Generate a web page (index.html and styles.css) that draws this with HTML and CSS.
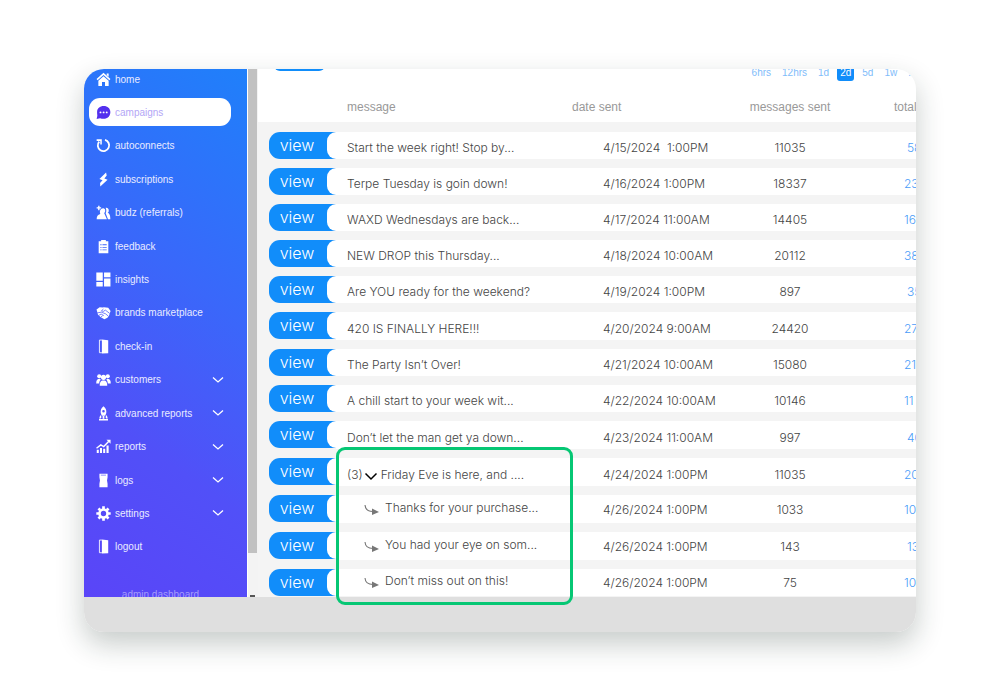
FILE: index.html
```html
<!DOCTYPE html>
<html lang="en">
<head>
<meta charset="utf-8">
<title>Campaigns</title>
<link rel="stylesheet" href="styles.css">
</head>
<body>
<div class="device">
  <div class="screen">
    <aside class="sidebar">
      <nav class="nav">
        <a class="item" href="#"><svg class="icon" viewBox="0 0 14 14"><path d="M1 7.2 7 1.8l6 5.4" fill="none" stroke="currentColor" stroke-width="1.5"/><path d="M10 1.5h1.8v3L10 3zM7 4l4.8 4.2V13H8.4V9.4H5.6V13H2.2V8.2z"/></svg>home</a>
        <a class="item active" href="#"><svg class="icon" viewBox="0 0 14 14"><path d="M7.2 1C3.6 1 1 3.300 1 6.700c0 1.600.3 2.500.2 3.600L.6 13l3.200-.6c1 .4 2.200.5 3.400.5 3.600 0 6.200-2.600 6.200-6.100S10.800 1 7.200 1z"/><g fill="#fff"><circle cx="4.200" cy="6.900" r=".9"/><circle cx="7.100" cy="6.900" r=".9"/><circle cx="10" cy="6.900" r=".9"/></g></svg>campaigns</a>
        <a class="item" href="#"><svg class="icon" viewBox="0 0 14 14"><path d="M3 3.400A5.300 5.300 0 1 0 8.400 1.800" fill="none" stroke="currentColor" stroke-width="1.700"/><path d="M.6 1.200h4.800V6H4V2.800H.6z"/></svg>autoconnects</a>
        <a class="item" href="#"><svg class="icon" viewBox="0 0 14 14"><path d="M9.400.4 3.200 6.600l2.900 1.100-2.300 2.500.2 3.400 6.800-6.400-3-1.200L10 3.200z"/></svg>subscriptions</a>
        <a class="item" href="#"><svg class="icon" viewBox="0 0 14 14"><path d="M2 .6h1.300V2h1.500v1.300H3.300v1.500H2V3.300H.6V2H2zM6 3.200c1.500-.5 2.800.7 2.600 2.300 0 1-.6 1.600-1 2l2.600 5.700H.6c.1-2.700.9-4 3.500-4.800C3.200 6.300 3.600 3.700 6 3.200zM9 2.600c1.900-.3 3.200 1 2.900 2.900-.1.900-.6 1.400-1 1.800 1.900.8 2.500 2.700 2.500 5.900h-2.200L9 7.700c.8-1.500.9-3.200 0-5.100z"/></svg>budz (referrals)</a>
        <a class="item" href="#"><svg class="icon" viewBox="0 0 14 14"><path fill-rule="evenodd" d="M2.500 2h2.300V1h4.400v1h2.300v11.300h-9zM4 5v.9h1.200V5zm2 0v.9h4V5zM4 7.400v.8h1.200v-.8zm2 0v.8h4v-.8zM4 9.800v.8h1.200v-.8zm2 0v.8h4v-.8z"/></svg>feedback</a>
        <a class="item" href="#"><svg class="icon" viewBox="0 0 14 14"><path d="M.3.500h6v7.600h-6zM7.500.500h6v4.300h-6zM.3 9.300h6v4.200h-6zM7.500 6h6v7.500h-6z"/></svg>insights</a>
        <a class="item" href="#"><svg class="icon" viewBox="0 0 14 14"><path d="M.5 4.200 3.400 2l2.800.4L7.400 2l4 .5 2.200 3.100-1.300 4-1.600 2.300-2.900 1.300-3.600-2L1.800 8.800z"/><path d="M1 7.400 5 6.700l3.900 1.500 2.400 2M6.900 3.800 5.100 5.400l1.700.6 2-1.200 4 3.100M2.800 9.500l2-1 2.500 1.400M4.700 11l1.500-1" fill="none" stroke="#4b59fa" stroke-width=".7"/></svg>brands marketplace</a>
        <a class="item" href="#"><svg class="icon" viewBox="0 0 14 14"><path d="M5.500.500 11.400 1.200v12L5.500 13.500z"/><path d="M5.500 1H3.200v11.800h2.300" fill="none" stroke="currentColor" stroke-width=".8"/></svg>check-in</a>
        <a class="item" href="#"><svg class="icon" viewBox="0 0 14 14"><circle cx="3" cy="4" r="1.900"/><circle cx="11" cy="4" r="1.900"/><circle cx="7" cy="5" r="2.400"/><path d="M.2 10.800C.2 7.800 1 6.400 3.500 6.400l1 .8C3.300 8 3 9.300 3 10.800zM13.800 10.800c0-3-.8-4.400-3.300-4.400l-1 .8C10.700 8 11 9.300 11 10.800zM3.500 12.900c0-3 .7-4.900 3.500-4.900s3.500 1.900 3.500 4.900z"/></svg>customers<svg class="caret" viewBox="0 0 12 8"><path d="m1 1.500 5 4.500 5-4.500"/></svg></a>
        <a class="item" href="#"><svg class="icon" viewBox="0 0 14 14"><path fill-rule="evenodd" d="M7 .3c2.200 1.600 2.900 3.900 2.600 6.200L8.600 9H5.400L4.400 6.500C4.100 4.200 4.800 1.900 7 .3zm0 3.400a1.200 1.200 0 1 0 0 2.400 1.200 1.200 0 0 0 0-2.400z"/><path d="M6.200 9.300h1.600V12H6.200zM4 8.300l1.200 2-.8 1.400H3zM10 8.300l-1.200 2 .8 1.400H11zM2.800 12.200h8.400v1.300H2.800z"/></svg>advanced reports<svg class="caret" viewBox="0 0 12 8"><path d="m1 1.500 5 4.500 5-4.500"/></svg></a>
        <a class="item" href="#"><svg class="icon" viewBox="0 0 14 14"><path d="M.7 10h1.900v3H.7zM3.700 8.500h1.900V13H3.700zM6.700 9h1.900v4H6.700zM9.800 6h2v7h-2z"/><path d="M.5 8.600 4.500 5.500l2.700 1.600 4.800-5" fill="none" stroke="currentColor" stroke-width="1.300"/><path d="M9.800.6h3.800v3.800z"/></svg>reports<svg class="caret" viewBox="0 0 12 8"><path d="m1 1.500 5 4.500 5-4.500"/></svg></a>
        <a class="item" href="#"><svg class="icon" viewBox="0 0 14 14"><path d="M3.200.600h7.600V4l-.5 3 .5 3v3.400H3.200V10l.5-3-.5-3z"/><path d="M4.500 2h4.800" stroke="#5051f8" stroke-width=".6"/></svg>logs<svg class="caret" viewBox="0 0 12 8"><path d="m1 1.500 5 4.500 5-4.500"/></svg></a>
        <a class="item" href="#"><svg class="icon" viewBox="0 0 14 14"><circle cx="7" cy="7" r="3.700" fill="none" stroke="currentColor" stroke-width="2.400"/><path d="M7 .3v2.500M7 11.200v2.500M.3 7h2.500M11.200 7h2.500M2.300 2.300 4 4M10 10l1.700 1.700M2.300 11.700 4 10M10 4l1.700-1.700" stroke="currentColor" stroke-width="2.500"/></svg>settings<svg class="caret" viewBox="0 0 12 8"><path d="m1 1.500 5 4.500 5-4.500"/></svg></a>
        <a class="item" href="#"><svg class="icon" viewBox="0 0 14 14"><path d="M5.500.500 11.400 1.200v12L5.500 13.500z"/><path d="M5.500 1H3.200v11.800h2.300" fill="none" stroke="currentColor" stroke-width=".8"/></svg>logout</a>
      </nav>
      <div class="dashboard">admin dashboard</div>
    </aside>
    <div class="track"><div class="thumb"></div><div class="arrow"></div></div>
    <main class="main">
      <div class="toolbar">
        <button class="create" type="button" aria-label="Create"></button>
        <div class="ranges">
          <button type="button">6hrs</button><button type="button">12hrs</button><button type="button">1d</button><button type="button" class="on">2d</button><button type="button">5d</button><button type="button">1w</button><button type="button">.</button>
        </div>
      </div>
      <table class="messages">
        <colgroup><col class="c-view"><col><col class="c-date"><col class="c-sent"><col class="c-total"></colgroup>
        <thead><tr><th></th><th>message</th><th>date sent</th><th>messages sent</th><th>total</th></tr></thead>
        <tbody>
          <tr><td><button class="view" type="button">view</button></td><td>Start the week right! Stop by...</td><td>4/15/2024 &nbsp;1:00PM</td><td>11035</td><td class="short">58</td></tr>
          <tr><td><button class="view" type="button">view</button></td><td>Terpe Tuesday is goin down!</td><td>4/16/2024 1:00PM</td><td>18337</td><td>23</td></tr>
          <tr><td><button class="view" type="button">view</button></td><td>WAXD Wednesdays are back...</td><td>4/17/2024 11:00AM</td><td>14405</td><td>16</td></tr>
          <tr><td><button class="view" type="button">view</button></td><td>NEW DROP this Thursday...</td><td>4/18/2024 10:00AM</td><td>20112</td><td>38</td></tr>
          <tr><td><button class="view" type="button">view</button></td><td>Are YOU ready for the weekend?</td><td>4/19/2024 1:00PM</td><td>897</td><td class="short">35</td></tr>
          <tr class="tall"><td><button class="view" type="button">view</button></td><td>420 IS FINALLY HERE!!!</td><td>4/20/2024 9:00AM</td><td>24420</td><td>27</td></tr>
          <tr><td><button class="view" type="button">view</button></td><td>The Party Isn’t Over!</td><td>4/21/2024 10:00AM</td><td>15080</td><td>21</td></tr>
          <tr><td><button class="view" type="button">view</button></td><td>A chill start to your week wit...</td><td>4/22/2024 10:00AM</td><td>10146</td><td>11</td></tr>
          <tr class="tall"><td><button class="view" type="button">view</button></td><td>Don’t let the man get ya down...</td><td>4/23/2024 11:00AM</td><td>997</td><td class="short">40</td></tr>
          <tr class="tall"><td><button class="view" type="button">view</button></td><td><span class="parent">(3)<svg class="toggle" viewBox="0 0 14 9"><path d="m1.500 1.500 5.500 5.500 5.500-5.500"/></svg>Friday Eve is here, and ....</span></td><td>4/24/2024 1:00PM</td><td>11035</td><td>20</td></tr>
          <tr class="tall reply"><td><button class="view" type="button">view</button></td><td><span class="child"><svg class="hook" viewBox="0 0 16 12"><path d="M1 1c.3 4.500 3 6.500 8 6.500" fill="none" stroke="#777" stroke-width="1.100"/><path d="M8 4.500 15 8l-7 3z" fill="#777"/></svg>Thanks for your purchase...</span></td><td>4/26/2024 1:00PM</td><td>1033</td><td>10</td></tr>
          <tr class="tall reply"><td><button class="view" type="button">view</button></td><td><span class="child"><svg class="hook" viewBox="0 0 16 12"><path d="M1 1c.3 4.500 3 6.500 8 6.500" fill="none" stroke="#777" stroke-width="1.100"/><path d="M8 4.500 15 8l-7 3z" fill="#777"/></svg>You had your eye on som...</span></td><td>4/26/2024 1:00PM</td><td>143</td><td class="short">13</td></tr>
          <tr class="reply"><td><button class="view" type="button">view</button></td><td><span class="child"><svg class="hook" viewBox="0 0 16 12"><path d="M1 1c.3 4.500 3 6.500 8 6.500" fill="none" stroke="#777" stroke-width="1.100"/><path d="M8 4.500 15 8l-7 3z" fill="#777"/></svg>Don’t miss out on this!</span></td><td>4/26/2024 1:00PM</td><td>75</td><td>10</td></tr>
        </tbody>
      </table>
    </main>
  </div>
  <div class="chin"></div>
  <div class="highlight"></div>
</div>
</body>
</html>
```
FILE: styles.css
```css
* { box-sizing: border-box; }
body {
  margin: 0;
  padding: 69px 84px;
  background: #fff;
  font-family: "Liberation Sans", Arial, sans-serif;
  font-weight: 300;
}
button { font: inherit; border: 0; padding: 0; background: none; }
.device {
  position: relative;
  overflow: hidden;
  border-radius: 20px;
  background: #fff;
  box-shadow: 0 12px 28px rgba(20, 40, 35, 0.24);
}
.screen { display: flex; overflow: hidden; }
.chin { height: 35px; background: #dfdfdf; }

.sidebar {
  flex: 0 0 163px;
  display: flex;
  flex-direction: column;
  overflow: hidden;
  background: linear-gradient(215deg, #1f80fa 0%, #3a67fa 40%, #5150f8 70%, #5a45f8 100%);
}
.nav {
  flex: 1;
  display: flex;
  flex-direction: column;
  justify-content: space-between;
  margin-top: -4px;
  padding: 0 16px 0 5px;
}
.item {
  display: flex;
  align-items: center;
  gap: 4px;
  height: 28px;
  padding: 0 7px;
  border-radius: 11px;
  color: #e9ebff;
  font-size: 10px;
  text-decoration: none;
  white-space: nowrap;
}
.item.active { background: #fff; color: #b3a6f6; }
.icon { width: 15px; height: 15px; flex: none; fill: currentColor; color: #fff; }
.item.active .icon { color: #5330ee; }
.caret { width: 12px; height: 8px; margin-left: auto; fill: none; stroke: #fff; stroke-width: 1.3; }
.dashboard {
  height: 36px;
  padding: 28px 10px 0 0;
  color: #a49bfb;
  font-size: 10px;
  line-height: 12px;
  text-align: center;
}

.track {
  flex: 0 0 11px;
  display: flex;
  flex-direction: column;
  justify-content: space-between;
  align-items: center;
  padding-right: 1px;
  background: #f3f3f3;
  border-left: 1px solid #fff;
}
.thumb { width: 9px; height: 484px; background: #c1c1c1; }
.arrow { width: 5px; height: 2px; background: #555; }

.main { flex: 1; min-width: 0; overflow: hidden; }
.toolbar { display: flex; justify-content: space-between; align-items: flex-start; height: 25px; padding: 0 2px 0 16px; }
.create { width: 51px; height: 18px; margin-top: -16px; border-radius: 6px; background: #118dfa; }
.ranges { display: flex; gap: 5px; margin-top: -5px; }
.ranges button { height: 17px; padding: 0 3px; border-radius: 3px; color: #7fbcfa; font-size: 10px; }
.ranges .on { background: #118dfa; color: #fff; }

.messages { width: 100%; table-layout: fixed; border-collapse: separate; border-spacing: 0; border-bottom: 1px solid #f4f4f4; }
.c-view { width: 78px; }
.c-date { width: 148px; }
.c-sent { width: 140px; }
.c-total { width: 56px; }
.messages th {
  height: 28px;
  padding: 0 0 2px;
  color: #999;
  font-size: 12px;
  font-weight: 300;
  line-height: 16px;
  text-align: left;
  vertical-align: middle;
  white-space: nowrap;
}
.messages td {
  height: 36px;
  padding: 5px 0 0;
  border-top: 9px solid #f4f4f4;
  color: #444;
  font-family: Inter, "Liberation Sans", sans-serif;
  font-size: 12px;
  line-height: 16px;
  white-space: nowrap;
}
.messages tbody tr:first-child td { height: 37px; border-top-width: 10px; }
.messages .tall td { height: 37px; }
.messages .reply td { padding-top: 1px; }
.messages td:first-child { padding: 0 0 0 11px; background: #f4f4f4; vertical-align: top; }
.messages th:nth-child(2), .messages td:nth-child(2) { padding-left: 11px; }
.messages td:nth-child(3) { padding-left: 31px; }
.messages th:nth-child(4), .messages td:nth-child(4) { text-align: center; }
.messages th:nth-child(5) { padding-left: 34px; }
.messages td:nth-child(5) { padding-left: 44px; color: #4a9cf8; }
.messages td.short { padding-left: 47px; }
.view {
  position: relative;
  display: block;
  width: 67px;
  height: 27px;
  padding-right: 11px;
  border-radius: 11px 0 0 11px;
  background: #118dfa;
  color: #fff;
  font-size: 16px;
  font-family: Inter, "Liberation Sans", sans-serif;
  line-height: 27px;
}
.view::after {
  content: "";
  position: absolute;
  top: 0;
  right: 0;
  width: 9px;
  height: 100%;
  border-radius: 9px 0 0 9px;
  background: #fff;
}
.parent, .child { display: flex; align-items: center; }
.child { padding: 0 0 4px 17px; gap: 5px; }
.toggle { width: 14px; height: 9px; margin: 4px 3px 0 1px; fill: none; stroke: #000; stroke-width: 1.5; }
.hook { width: 16px; height: 12px; margin-top: 4px; }
.highlight {
  position: absolute;
  left: 252px;
  bottom: 27px;
  width: 237px;
  height: 158px;
  border: 3px solid #06c774;
  border-radius: 9px;
}
```
